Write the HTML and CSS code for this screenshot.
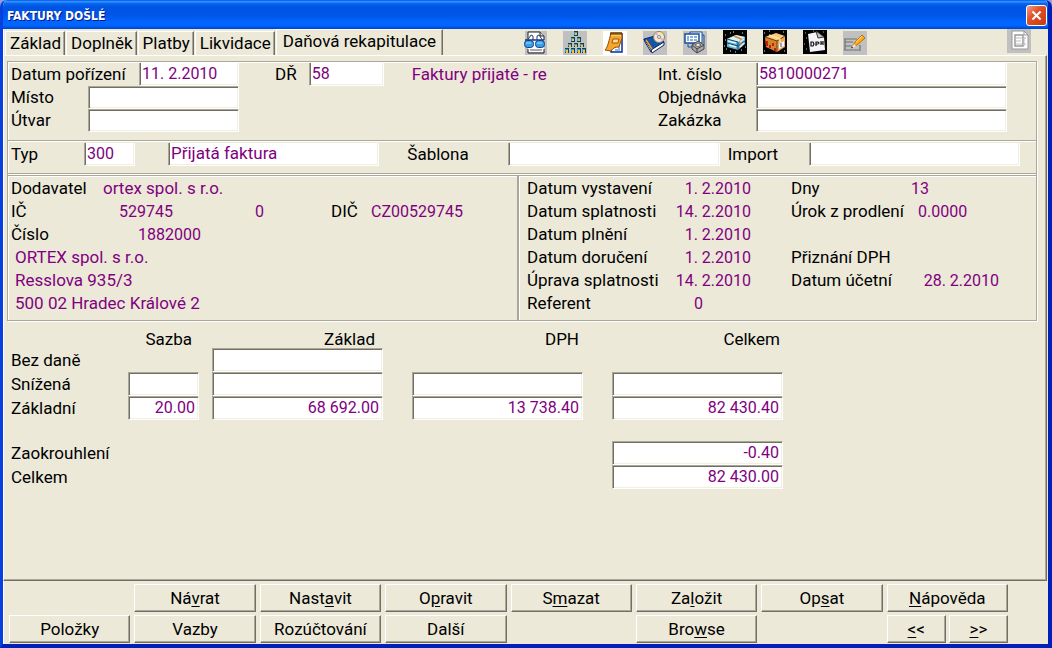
FILE: index.html
```html
<!DOCTYPE html>
<html lang="cs">
<head>
<meta charset="utf-8">
<title>Faktury došlé</title>
<link rel="stylesheet" href="styles.css">
</head>
<body>
<main class="window">
  <header class="titlebar">
    <h1>FAKTURY DOŠLÉ</h1>
    <button class="close" aria-label="Zavřít"><svg viewBox="0 0 21 21"><path d="M6 6l9 9M15 6l-9 9" stroke="#fff" stroke-width="2.2"/></svg></button>
  </header>

  <div class="toprow">
    <div class="tabs" role="tablist">
      <button class="tab" role="tab">Základ</button>
      <button class="tab" role="tab">Doplněk</button>
      <button class="tab" role="tab">Platby</button>
      <button class="tab" role="tab">Likvidace</button>
      <button class="tab active" role="tab" aria-selected="true">Daňová rekapitulace</button>
    </div>
    <div class="tools">
      <button class="tool" aria-label="Prohlížet"><svg viewBox="0 0 24 24"><path fill="#c0c0c0" d="M2 0h22v24H2z"/><path d="M5 1h12l4 4v16H5z" fill="#fff"/><path d="M5 8V1h12l4 4v4M5 18v4h16v-4" fill="none" stroke="#222"/><path d="M17 1v4h4" fill="#ddd" stroke="#222"/><path d="M4 10l4-6 2 1v4M14 9V5l2-1 4 6" fill="none" stroke="#203878"/><path d="M2 9h19" stroke="#183870" stroke-width="1.500"/><rect x="1.500" y="9.500" width="9" height="7" rx="3" fill="#38a0e8" stroke="#104080"/><rect x="12.500" y="9.500" width="9" height="7" rx="3" fill="#38a0e8" stroke="#104080"/><path d="M3 12h5M14 12h5" stroke="#a8e0ff"/><path d="M7 19h12" stroke="#aaa" stroke-width="2"/></svg></button>
      <button class="tool" aria-label="Struktura"><svg viewBox="0 0 24 24"><path fill="#c0c0c0" d="M0 0h24v24H0z"/><g fill="#104060"><path d="M11 0h4v5h-4zM8 6h4v5H8zM14 6h4v5h-4zM5 12h4v4H5zM11 12h4v4h-4zM17 12h4v4h-4zM2 17h4v5H2zM8 17h4v5H8zM14 17h4v5h-4zM19 17h4v5h-4z"/></g><g fill="#30a0d0"><path d="M11 1h3v3h-3zM8 7h3v3H8zM14 7h3v3h-3zM5 13h3v2H5zM11 13h3v2h-3zM17 13h3v2h-3zM2 18h3v3H2zM8 18h3v3H8zM14 18h3v3h-3zM19 18h3v3h-3z"/></g><g fill="#ffc020"><path d="M12 2h2v2h-2zM9 8h2v2H9zM15 8h2v2h-2zM6 14h2v2H6zM12 14h2v2h-2zM18 14h2v2h-2zM3 19h2v3H3zM9 19h2v3H9zM15 19h2v3h-2zM20 19h2v3h-2z"/></g></svg></button>
      <button class="tool" aria-label="Poznámky"><svg viewBox="0 0 24 24"><path fill="#fff" d="M0 0h24v24H0z"/><path d="M8 3h11v18H8z" fill="#fff" stroke="#083090" stroke-width="1.500"/><path d="M8 2h11v5l-3 9c-4 0-6 1-8 4l-6-1c3-3 4-10 6-17z" fill="#f6a62c" stroke="#9a4b08"/><path d="M8 4h10" stroke="#fbd060" stroke-width="2"/><path d="M8 1v3M10 1v3M12 1v3M14 1v3M16 1v3M18 1v3" stroke="#402000"/><path d="M10 8h6l-1 4H9z" fill="#ffdf90" stroke="#a05808"/><path d="M12 19h5M15 17h2" stroke="#2878d0"/></svg></button>
      <button class="tool" aria-label="Kniha"><svg viewBox="0 0 24 24"><path fill="#c0c0c0" d="M0 0h24v24H0z"/><path d="M1 8l11-3 9 6-12 9z" fill="#1454a8" stroke="#082870"/><path d="M1 8l7 10v3L2 11zM8 19l13-8v3L9 22z" fill="#fff" stroke="#082870"/><path d="M3 9l6 9" stroke="#f0a020" stroke-width="1.500"/><circle cx="16" cy="6" r="5.500" fill="#eee8d8" stroke="#8c8060"/><path d="M16 6l-4-3 2-2zM16 6l5 2-2 2z" fill="#e8a8d0"/><path d="M16 6l1-5 3 2z" fill="#f8e880"/><circle cx="16" cy="6" r="1.500" fill="#fff" stroke="#887"/></svg></button>
      <button class="tool" aria-label="Doklady"><svg viewBox="0 0 24 24"><path fill="#c0c0c0" d="M0 0h24v24H0z"/><path d="M7 1h12v11H7z" fill="#fff" stroke="#1450a0"/><path d="M2 3h14v9H2z" fill="#fff" stroke="#1450a0" stroke-width="1.500"/><path d="M5 5v5M7 6h3M7 9h3M11 6h3M11 9h3" stroke="#1860b8"/><path d="M5 13v3h4M19 4h2v10" fill="none" stroke="#1450a0"/><path d="M9 14l6-4 6 4v4l-7 4-5-4z" fill="#a8a8a8" stroke="#444"/><path d="M9 14l5 4 7-4M14 18v4" fill="none" stroke="#444"/><path d="M12 14l3-2 3 2-3 2z" fill="#e8e8e8" stroke="#666"/></svg></button>
      <button class="tool raised" aria-label="Balík"><svg viewBox="0 0 24 24"><path fill="#000" d="M0 0h24v24H0z"/><path d="M4 9l9-4 9 2v7l-7 6-11-3z" fill="#68b0d0"/><path d="M4 9l9-4 9 2-7 5z" fill="#d4f0f8"/><path d="M4 13l11 3 7-5M4 9l11 3v8" fill="none" stroke="#10486c"/><path d="M11 6l7 3v7" fill="none" stroke="#e08030" stroke-width="1.500"/><path d="M5 11l8 2M6 15l7 2M17 12l4-3M17 17l4-4" stroke="#d8f4ff" stroke-width="1.500"/><path d="M2 5h1M7 3h1M19 3h1M1 16h1M3 19h1M7 21h1M18 20h1M22 17h1M2 10h1M10 2h1M12 22h1" stroke="#e8e8e8"/></svg></button>
      <button class="tool raised" aria-label="Sklad"><svg viewBox="0 0 24 24"><path fill="#000" d="M0 0h24v24H0z"/><path d="M2 7l11-4 9 3-8 5z" fill="#f8c878"/><path d="M2 7l12 4v11L3 17z" fill="#d08830"/><path d="M14 11l8-5v11l-8 5z" fill="#e8a850"/><path d="M2 7l12 4 8-5M14 11v11" fill="none" stroke="#754008"/><path d="M6 5l11 4v4" fill="none" stroke="#ffe0a0" stroke-width="1.500"/><path d="M4 11v5M7 15v3M10 13v3M12 18v3" stroke="#d01818" stroke-width="2"/><path d="M16 14l5-3v5l-5 3z" fill="#f4f4ff"/><path d="M18 13v4" stroke="#4050b0"/><path d="M1 3h1M20 2h1M1 21h1M21 21h1M6 1h1" stroke="#ddd"/></svg></button>
      <button class="tool raised" aria-label="DPH"><svg viewBox="0 0 24 24"><path fill="#000" d="M0 0h24v24H0z"/><path d="M5 4l9-2 7 5 1 13-15 2z" fill="#f4f4f8"/><path d="M13 1l2 7 6-1z" fill="#c8c8c8" stroke="#333"/><path d="M2 3h1M3 8h1M1 14h1M20 2h1M3 19h1M10 1h1" stroke="#aaa"/><path d="M8 12v4h2l1-2-1-2zM13 16v-4h2l1 1-1 1h-2M18 11v4M20 11v4M18 13h2" fill="none" stroke="#111" stroke-width="1.200"/></svg></button>
      <button class="tool" aria-label="Upravit"><svg viewBox="0 0 24 24"><path fill="#c0c0c0" d="M0 0h24v24H0z"/><path d="M1 8h13M2 11h8M2 15h7M1 19h15M2 8v11M17 14v6" stroke="#707070" stroke-width="1.200"/><path d="M10 15l2-4 7-7 3 3-8 7z" fill="#ffad18" stroke="#c06c08"/><path d="M13 11l6-6" stroke="#ffe070"/><path d="M9 17l2-4 2 2z" fill="#fff0c8"/><path d="M8 17l2-1" stroke="#333"/></svg></button>
    </div>
    <button class="tool printer" aria-label="Dokument"><svg viewBox="0 0 24 24"><path fill="#c0c0c0" d="M0 0h24v24H0z"/><path d="M5 2h12l4 4v14H5z" fill="#fff" stroke="#999"/><path d="M17 2v4h4" fill="none" stroke="#999"/><path d="M8 6h8v11H8z" fill="none" stroke="#999" stroke-width="1.500"/><path d="M7 9h12M8 12h6M8 15h11M17 8v9" stroke="#bbb"/></svg></button>
  </div>

  <section class="panel">
    <div class="box">
      <form class="ids">
        <div class="stack left">
          <div class="row"><label for="date">Datum pořízení</label><input id="date" class="field open w-date" value="11. 2.2010"></div>
          <div class="row"><label for="place">Místo</label><input id="place" class="field w-place"></div>
          <div class="row"><label for="unit">Útvar</label><input id="unit" class="field w-place"></div>
        </div>
        <div class="row series"><label for="dr">DŘ</label><input id="dr" class="field open w-dr" value="58"><output class="text" for="dr">Faktury přijaté - re</output></div>
        <div class="stack right">
          <div class="row"><label for="num">Int. číslo</label><input id="num" class="field open w-num" value="5810000271"></div>
          <div class="row"><label for="order">Objednávka</label><input id="order" class="field w-num"></div>
          <div class="row"><label for="job">Zakázka</label><input id="job" class="field w-num"></div>
        </div>
      </form>

      <form class="kind">
        <label for="type">Typ</label><input id="type" class="field open" value="300">
        <input id="typename" aria-label="Název typu" class="field open name text" value="Přijatá faktura">
        <label for="tpl">Šablona</label><input id="tpl" class="field open">
        <label for="imp" class="import">Import</label><input id="imp" class="field open">
      </form>

      <div class="details">
        <div class="supplier">
          <span>Dodavatel</span><output class="s-name text">ortex spol. s r.o.</output>
          <span class="c1">IČ</span><output class="s-ic">529745</output><output class="s-zero">0</output><span class="s-dic">DIČ</span><output class="s-vat">CZ00529745</output>
          <span class="c1">Číslo</span><output class="s-no">1882000</output>
          <address class="addr">ORTEX spol. s r.o.<br>Resslova 935/3<br>500 02 Hradec Králové 2</address>
        </div>
        <div class="dates">
          <span>Datum vystavení</span><output class="end">1. 2.2010</output><span class="c4">Dny</span><output>13</output>
          <span class="c1">Datum splatnosti</span><output class="end">14. 2.2010</output><span class="c4">Úrok z prodlení</span><output class="rate">0.0000</output>
          <span class="c1">Datum plnění</span><output class="end">1. 2.2010</output>
          <span class="c1">Datum doručení</span><output class="end">1. 2.2010</output><span class="c4">Přiznání DPH</span>
          <span class="c1">Úprava splatnosti</span><output class="end">14. 2.2010</output><span class="c4">Datum účetní</span><output class="end">28. 2.2010</output>
          <span class="c1">Referent</span><output class="clerk">0</output>
        </div>
      </div>
    </div>

    <table class="sums">
      <colgroup><col class="k-label"><col class="k-rate"><col class="k-base"><col class="k-tax"><col class="k-total"></colgroup>
      <thead><tr><td></td><th scope="col" class="h-rate">Sazba</th><th scope="col" class="h-base">Základ</th><th scope="col">DPH</th><th scope="col">Celkem</th></tr></thead>
      <tbody>
        <tr><th scope="row">Bez daně</th><td></td><td><input class="field" aria-label="Bez daně základ"></td><td></td><td></td></tr>
        <tr><th scope="row">Snížená</th><td><input class="field" aria-label="Snížená sazba"></td><td><input class="field" aria-label="Snížená základ"></td><td><input class="field" aria-label="Snížená DPH"></td><td><input class="field" aria-label="Snížená celkem"></td></tr>
        <tr><th scope="row">Základní</th><td><input class="field" aria-label="Základní sazba" value="20.00"></td><td><input class="field" aria-label="Základní základ" value="68 692.00"></td><td><input class="field" aria-label="Základní DPH" value="13 738.40"></td><td><input class="field" aria-label="Základní celkem" value="82 430.40"></td></tr>
        <tr class="spacer"><td colspan="5"></td></tr>
        <tr><th scope="row">Zaokrouhlení</th><td></td><td></td><td></td><td><input class="field" aria-label="Zaokrouhlení" value="-0.40"></td></tr>
        <tr><th scope="row">Celkem</th><td></td><td></td><td></td><td><input class="field" aria-label="Celkem" value="82 430.00"></td></tr>
      </tbody>
    </table>
  </section>

  <footer class="actions">
    <button class="btn second">Ná<u>v</u>rat</button>
    <button class="btn">Nast<u>a</u>vit</button>
    <button class="btn">O<u>p</u>ravit</button>
    <button class="btn">S<u>m</u>azat</button>
    <button class="btn">Za<u>l</u>ožit</button>
    <button class="btn">Op<u>s</u>at</button>
    <button class="btn"><u>N</u>ápověda</button>
    <button class="btn">Položky</button>
    <button class="btn">Vazby</button>
    <button class="btn">Rozúčtování</button>
    <button class="btn">Další</button>
    <button class="btn sixth">Bro<u>w</u>se</button>
    <div class="pager"><button class="btn"><u>&lt;</u>&lt;</button><button class="btn"><u>&gt;</u>&gt;</button></div>
  </footer>
</main>
</body>
</html>
```
FILE: styles.css
```css
* { box-sizing: border-box; }

body {
  margin: 0;
  background: #8ba0e0;
  color: #000;
  font: 17px/23px Roboto, "Liberation Sans", sans-serif;
}

button, input { font: inherit; color: inherit; }
button { padding: 0; cursor: default; }
output, .field { color: #800080; font-size: 16px; }
output.text, .field.text { font-size: 17px; }
svg { display: block; fill: none; }

.window {
  display: flex;
  flex-direction: column;
  min-height: 100vh;
  background: #ece9d8;
  border: solid;
  border-width: 0 4px 4px 3px;
  border-color: #0831d9 #0020b8 #0020b8 #0840e0;
  border-radius: 7px 7px 0 0;
  box-shadow: inset 1px 0 #fff;
  overflow: hidden;
}

.titlebar {
  display: flex;
  align-items: center;
  justify-content: space-between;
  height: 29px;
  margin: 0 -4px 0 -3px;
  padding: 2px 5px 0 7px;
  background: linear-gradient(#0058ee 0, #3a93ff 6%, #0468f0 12%, #0054e3 25%, #0056e8 55%, #0066ff 75%, #0066ff 88%, #0042c8 100%);
}

.titlebar h1 {
  margin: 0;
  color: #fff;
  font: 700 12px/20px "DejaVu Sans Condensed", "Open Sans", sans-serif;
  text-shadow: 1px 1px #0a1883;
}

.close {
  width: 21px;
  height: 21px;
  border: 1px solid #fff;
  border-radius: 3px;
  background: linear-gradient(135deg, #f0a088, #e0512c 40%, #c83a10);
}
.close svg { width: 19px; height: 19px; }

.toprow {
  display: flex;
  align-items: flex-end;
  height: 26px;
  padding-left: 2px;
}

.tabs { display: flex; align-items: flex-end; gap: 1px; }

.tab {
  height: 24px;
  padding: 0 3px 0 4px;
  border: solid;
  border-width: 1px 1px 0;
  border-color: #fff #716f64 #fff #fff;
  box-shadow: inset -1px 0 #aca899;
  background: #ece9d8;
  white-space: nowrap;
}

.tab.active {
  height: 27px;
  padding: 0 6px 3px;
  margin-bottom: -1px;
}

.tools { display: flex; gap: 16px; margin-left: auto; }
.tool { width: 24px; height: 24px; border: 0; background: none; }
.tool svg { width: 24px; height: 24px; }
.tool.raised { margin-top: -1px; }
.printer { align-self: flex-start; margin: 0 17px 0 140px; }

.panel {
  flex: 1;
  margin: 0 1px 0 0;
  padding: 5px 9px 8px 3px;
  border: 1px solid;
  border-color: #fff #716f64 #716f64 #fff;
  box-shadow: inset -1px -1px #aca899;
}

.box {
  border: 1px solid #aca899;
  box-shadow: inset 1px 1px #fff, 1px 1px #fff;
}

.field {
  height: 23px;
  min-width: 0;
  padding: 0 3px 1px 2px;
  background: #fff;
  border: 1px solid;
  border-color: #aca899 #fff #fff #aca899;
  border-radius: 0;
  box-shadow: inset 1px 1px #716f64, inset -1px -1px #f1efe2;
  outline: 0;
}
.field.open {
  border-top: 0;
  box-shadow: inset 1px 0 #716f64, inset -1px -1px #f1efe2;
}

.row { display: flex; align-items: center; justify-content: space-between; }

.ids {
  display: flex;
  justify-content: space-between;
  align-items: flex-start;
  padding: 1px 29px 8px 3px;
  border-bottom: 1px solid #aca899;
}
.ids .left { width: 228px; }
.ids .right { width: 349px; }
.w-date { width: 100px; }
.w-place { width: 151px; }
.w-num { width: 251px; }
.series { width: 276px; justify-content: flex-start; margin-right: 71px; }
.w-dr { width: 75px; margin: 0 28px 0 12px; }

.kind {
  display: grid;
  grid-template-columns: 73px 51px 33px 1fr 28px 101px 1fr 8px 81px 1fr;
  align-items: center;
  padding: 2px 16px 7px 3px;
  border-bottom: 1px solid #aca899;
  box-shadow: inset 0 1px #fff;
}
.kind .name { grid-column: 4; }
.kind label[for="tpl"] { grid-column: 6; }
.kind .import { grid-column: 9; }

.details {
  display: grid;
  grid-template-columns: 511px 1fr;
  margin-top: 1px;
  border-top: 1px solid #aca899;
  box-shadow: inset 0 1px #fff, 0 -1px #fff;
}

.supplier, .dates {
  display: grid;
  grid-auto-rows: 23px;
  padding-top: 1px;
  padding-bottom: 5px;
}
.supplier {
  grid-template-columns: 92px 70px 28px 63px 67px 40px 1fr;
  padding-left: 3px;
  border-right: 2px solid #aca899;
}
.c1 { grid-column: 1; }
.s-name { grid-column: 2 / 8; }
.s-ic { text-align: right; }
.s-zero { grid-column: 3 / 5; text-align: right; }
.s-dic { grid-column: 6; }
.s-no { grid-column: 2 / 4; text-align: right; }
.addr { grid-column: 1 / 8; padding-left: 4px; color: #800080; font-style: normal; grid-row: 4 / 7; }

.dates {
  grid-template-columns: 134px 90px 40px 120px 88px 1fr;
  padding-left: 8px;
  box-shadow: inset 1px 0 #fff;
}
.c4 { grid-column: 4; }
.end { text-align: right; }
.clerk { padding-left: 33px; }
.rate { padding-left: 7px; }

.sums {
  width: 773px;
  margin: 7px 0 0 4px;
  border-collapse: collapse;
  table-layout: fixed;
}
.k-label { width: 117px; }
.k-rate { width: 84px; }
.k-base, .k-tax { width: 200px; }
.k-total { width: 172px; }
.sums th, .sums td { padding: 0; font-weight: 400; text-align: left; }
.sums thead th { padding: 2px 33px 0 0; text-align: right; line-height: 18px; }
.sums thead .h-rate { padding-right: 20px; }
.sums thead .h-base { padding-right: 37px; }
.sums thead th:last-child { padding-right: 4px; }
.sums .field { display: block; width: 171px; height: 24px; text-align: right; }
.sums td:nth-child(2) .field { width: 71px; }
.sums tbody tr { height: 24px; }
.sums tbody .spacer { height: 21px; }

.actions {
  display: grid;
  grid-template-columns: repeat(8, 1fr);
  gap: 3px 4px;
  padding: 3px 40px 1px 6px;
}

.btn {
  height: 28px;
  background: #ece9d8;
  border: 1px solid;
  border-color: #fff #716f64 #716f64 #fff;
  box-shadow: inset -1px -1px #aca899;
}
.btn u { text-underline-offset: 2px; }
.second { grid-column: 2; }
.sixth { grid-column: 6; }
.pager { display: grid; grid-template-columns: 1fr 1fr; gap: 3px; grid-column: 8; }
```
